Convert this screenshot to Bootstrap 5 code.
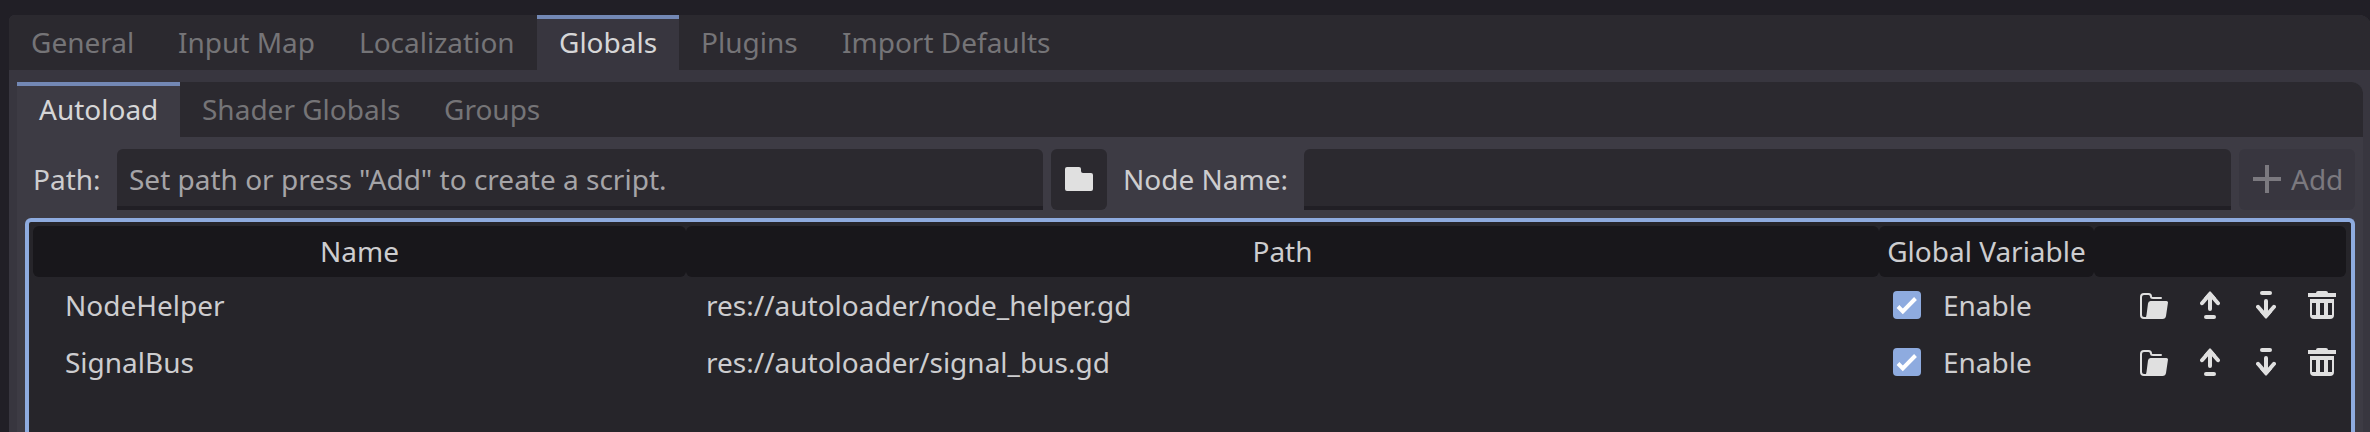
<!DOCTYPE html>
<html lang="en">
<head>
<meta charset="utf-8">
<title>Project Settings</title>
<link href="https://cdn.jsdelivr.net/npm/bootstrap@5.3.0/dist/css/bootstrap.min.css" rel="stylesheet">
<style>
body{background:#211f26;color:#cdcdcf;font:28px/38px "Noto Sans",sans-serif;height:432px;overflow:hidden}
.outer-panel{margin:15px -1px 0 9px;height:417px;background:#38363f;border-radius:6px 12px 0 0}
.strip{background:#2b292f;height:55px;border-radius:6px 12px 0 0}
.strip .nav-link{color:#757477;padding:8px 22px 9px;height:55px;border:0;border-radius:0;line-height:38px;white-space:nowrap}
.strip .nav-link.active{color:#d6d6d7;background:#38363f;box-shadow:inset 0 4px #7388b5}
.inner-panel{margin:12px 8px 0 8px;height:350px;background:#3d3b44;border-radius:0 12px 0 0}
.inner-panel .strip{border-radius:0 12px 0 0}
.inner-panel .strip .nav-link.active{background:#3d3b44}
.tool-row{padding:12px 8px 8px;height:81px}
.tool-row label{padding-bottom:1px;white-space:nowrap}
.line-box{height:61px;border:0;border-bottom:4px solid #211f25;border-radius:6px 6px 0 0;background:#2b292f;padding:2px 12px 0;font-size:28px;line-height:38px;color:#cdcdcf}
.line-box::placeholder{color:#a5a4a7;opacity:1}
.line-box:focus{background:#2b292f;color:#fff;box-shadow:none}
.tool-btn{height:61px;border:0;border-radius:6px;background:#2b292f;padding:0 0 1px;font-size:28px;line-height:38px}
.tool-btn:disabled{background:#38363f;color:#7b797f;opacity:1}
.tree{margin:0 8px;height:219px;border:4px solid #8eabdf;border-bottom:0;border-radius:6px 6px 0 0;background:#26252a;padding:4px 5px 0 4px}
.tree-grid{display:grid;grid-template-columns:653px 1193px 215px 252px}
.head-cell{height:51px;background:#18171b;border-radius:6px;text-align:center;line-height:51px}
.body-cell{height:57px;display:flex;align-items:center;white-space:nowrap;padding-bottom:1px}
svg{display:block;flex:none}
</style>
</head>
<body>
<main class="outer-panel">
  <nav class="strip nav flex-nowrap">
    <a class="nav-link" style="width:147px">General</a>
    <a class="nav-link" style="width:181px">Input Map</a>
    <a class="nav-link" style="width:200px">Localization</a>
    <a class="nav-link active" style="width:142px">Globals</a>
    <a class="nav-link" style="width:141px">Plugins</a>
    <a class="nav-link">Import Defaults</a>
  </nav>
  <section class="inner-panel">
    <nav class="strip nav flex-nowrap">
      <a class="nav-link active" style="width:163px">Autoload</a>
      <a class="nav-link" style="width:242px">Shader Globals</a>
      <a class="nav-link">Groups</a>
    </nav>
    <div class="tool-row d-flex align-items-center">
      <label for="path" style="width:92px;padding-left:8px">Path:</label>
      <input id="path" class="line-box form-control" style="width:926px" placeholder="Set path or press &quot;Add&quot; to create a script.">
      <button class="tool-btn btn ms-2 d-flex align-items-center justify-content-center" style="width:56px" aria-label="Browse"><svg width="28" height="24" viewBox="0 0 28 24"><path fill="#e0e0e0" d="M2 0H14Q16 0 16 2V4Q16 6 18 6H26Q28 6 28 8V22Q28 24 26 24H2Q0 24 0 22V2Q0 0 2 0Z"/></svg></button>
      <label for="node" style="width:197px;padding-left:16px">Node Name:</label>
      <input id="node" class="line-box form-control" style="width:927px">
      <button class="tool-btn btn ms-2 d-flex align-items-center" style="width:116px;padding-left:14px" disabled><svg width="28" height="28" viewBox="0 0 28 28"><path fill="#7b797f" d="M12 0h4v12h12v4H16v12h-4V16H0v-4h12z"/></svg><span style="margin-left:10px">Add</span></button>
    </div>
    <div class="tree">
      <div class="tree-grid" id="tree">
        <div class="head-cell">Name</div><div class="head-cell">Path</div><div class="head-cell">Global Variable</div><div class="head-cell"></div>
      </div>
    </div>
  </section>
</main>
<svg width="0" height="0" class="position-absolute">
  <symbol id="i-check" viewBox="0 0 28 28"><rect width="28" height="28" rx="4" fill="#8eabdf"/><path d="M5 15.500 9.800 20.300 22.500 7.500" fill="none" stroke="#fff" stroke-width="4"/></symbol>
  <symbol id="i-open" viewBox="0 0 28 26"><path d="M5.500 25H4Q1 25 1 22V4Q1 1 4 1H8.500Q11 1 11 3.500Q11 5 13 5H21" fill="none" stroke="#e0e0e0" stroke-width="2" stroke-linecap="round"/><path d="M10.500 8H26.500Q28 8 28 9.500L26 23Q25.500 26 22.500 26H4Q6 25.500 6.500 22L8 10.500Q8.300 8 10.500 8Z" fill="#e0e0e0"/></symbol>
  <symbol id="i-up" viewBox="0 0 20 28"><path d="M10 4V18M2 12.200 10 3 18 12.200" fill="none" stroke="#e0e0e0" stroke-width="4" stroke-linecap="round" stroke-linejoin="round"/><path d="M10 0 16 7H4Z" fill="#e0e0e0"/><rect x="4" y="24" width="12" height="4" rx="2" fill="#e0e0e0"/></symbol>
  <symbol id="i-bin" viewBox="0 0 28 28"><path fill="#e0e0e0" fill-rule="evenodd" d="M8 2Q8 0 10 0H18Q20 0 20 2H28V6H0V2ZM2 8H26V24Q26 28 22 28H6Q2 28 2 24ZM4 12V24H8V12ZM12 12V24H16V12ZM20 12V24H24V12Z"/></symbol>
</svg>
<script src="https://cdn.jsdelivr.net/npm/bootstrap@5.3.0/dist/js/bootstrap.bundle.min.js"></script>
<script>
const rows=[['NodeHelper','res://autoloader/node_helper.gd'],['SignalBus','res://autoloader/signal_bus.gd']];
document.getElementById('tree').insertAdjacentHTML('beforeend',rows.map(([name,path])=>`
<div class="body-cell" style="padding-left:32px">${name}</div>
<div class="body-cell" style="padding-left:20px">${path}</div>
<div class="body-cell" style="padding-left:14px"><svg width="28" height="28"><use href="#i-check"/></svg><span style="margin-left:22px">Enable</span></div>
<div class="body-cell" style="padding-left:46px"><svg width="28" height="26" style="margin-top:2px"><use href="#i-open"/></svg><svg width="20" height="28" style="margin-left:32px"><use href="#i-up"/></svg><svg width="20" height="28" style="margin-left:36px;transform:rotate(180deg)"><use href="#i-up"/></svg><svg width="28" height="28" style="margin-left:32px"><use href="#i-bin"/></svg></div>`).join(''));
</script>
</body>
</html>
